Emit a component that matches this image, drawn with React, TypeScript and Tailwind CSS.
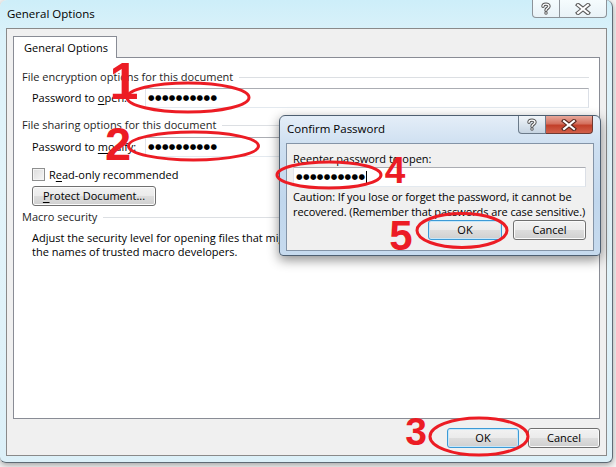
import React from "react";

const ui = "font-['Segoe_UI','Open_Sans',sans-serif] text-[11px] text-black";

function CaptionButtons({ active }: { active?: boolean }) {
  return (
    <div className="flex h-[18px]">
      <div
        className={`w-[28px] h-[18px] flex items-center justify-center border border-t-0 rounded-bl-[4px] ${
          active
            ? "border-[#6b7a8a] bg-[linear-gradient(180deg,#f1f5f9_0%,#dbe5ee_50%,#c6d4e2_100%)]"
            : "border-[#8d9399] bg-[linear-gradient(180deg,#ffffffcc_0%,#eef3f6cc_100%)]"
        }`}
      >
        <svg width="10" height="13" viewBox="0 0 10 13">
          <path
            d="M2 4.2 C2 1.5 8 1.3 8 4.2 C8 6.3 5 6.2 5 8.3"
            fill="none"
            stroke="#555"
            strokeWidth="3.4"
            strokeLinecap="round"
          />
          <path
            d="M2 4.2 C2 1.5 8 1.3 8 4.2 C8 6.3 5 6.2 5 8.3"
            fill="none"
            stroke="#fff"
            strokeWidth="1.4"
            strokeLinecap="round"
          />
          <circle cx="5" cy="11" r="1.7" fill="#555" />
          <circle cx="5" cy="11" r="0.8" fill="#fff" />
        </svg>
      </div>
      <div
        className={`w-[47px] h-[18px] flex items-center justify-center border border-t-0 border-l-0 rounded-br-[4px] ${
          active
            ? "border-[#6e3a33] bg-[linear-gradient(180deg,#e8a89b_0%,#d4705e_45%,#c2402a_55%,#d2604a_100%)]"
            : "border-[#8d9399] bg-[linear-gradient(180deg,#ffffffcc_0%,#eef3f6cc_100%)]"
        }`}
      >
        <svg width="16" height="12" viewBox="0 0 16 12">
          <path d="M3 2 L13 10 M13 2 L3 10" stroke={active ? "#5a2a22" : "#5d5d5d"} strokeWidth="4.2" strokeLinecap="square" />
          <path d="M3 2 L13 10 M13 2 L3 10" stroke="#fff" strokeWidth="2" strokeLinecap="square" />
        </svg>
      </div>
    </div>
  );
}

function Btn({ children, def, w = "w-[73px]" }: { children: React.ReactNode; def?: boolean; w?: string }) {
  return (
    <div
      className={`${w} h-[20px] flex items-center justify-center rounded-[3px] border whitespace-nowrap ${
        def
          ? "border-[#3c9ad6] shadow-[inset_0_0_0_1px_#c7e7f9]"
          : "border-[#707070] shadow-[inset_0_0_0_1px_#fbfbfb]"
      } bg-[linear-gradient(180deg,#f2f2f2_0%,#ebebeb_48%,#dddddd_52%,#cfcfcf_100%)]`}
    >
      {children}
    </div>
  );
}

function Dots() {
  return (
    <span className="font-['DejaVu_Sans',sans-serif] text-[7.5px] leading-[18px] tracking-[0.4px]">●●●●●●●●●●</span>
  );
}

function GroupHeading({ text }: { text: string }) {
  return (
    <div className="flex items-center h-[16px] pr-[10px]">
      <span className="leading-[16px] text-[#1e1e1e] whitespace-nowrap">{text}</span>
      <div className="flex-1 ml-[6px] h-px bg-[#dcdfe3]" />
    </div>
  );
}

function PasswordRow({ label }: { label: React.ReactNode }) {
  return (
    <div className="flex items-center pl-[10px] pr-[10px] h-[20px]">
      <span className="w-[113px] leading-[16px] whitespace-nowrap">{label}</span>
      <div className="flex-1 h-[20px] border border-[#abadb3] border-l-[#e2e3ea] border-r-[#dbdfe6] border-b-[#e3e9ef] bg-white pl-[2px] flex items-center">
        <Dots />
      </div>
    </div>
  );
}

function ConfirmDialog() {
  return (
    <div className="absolute left-[279px] top-[115px] w-[322px] h-[141px] rounded-t-[6px] rounded-b-[4px] border border-[#4e5f71] bg-[linear-gradient(180deg,#e4eef8_0%,#cfe0f1_20%,#c1d7ed_60%,#c6daee_100%)] shadow-[0_4px_12px_rgba(0,0,0,0.45)] flex flex-col">
      <div className="h-[27px] flex justify-between">
        <span className="pl-[7px] pt-[5px] leading-[16px] text-[11.5px]">Confirm Password</span>
        <div className="mr-[7px]">
          <CaptionButtons active />
        </div>
      </div>
      <div className="mx-[6px] h-[108px] border border-[#8494a7] bg-[#f0f0f0] flex flex-col pl-[6px] pr-[7px] pt-[7px]">
        <span className="leading-[15px]">Reenter password to open:</span>
        <div className="mt-[1px] h-[20px] border border-[#abadb3] border-l-[#e2e3ea] border-r-[#dbdfe6] border-b-[#e3e9ef] bg-white pl-[2px] flex items-center">
          <Dots />
          <span className="ml-[1px] w-px h-[13px] bg-black" />
        </div>
        <div className="mt-[2px] leading-[15px] whitespace-nowrap tracking-[-0.1px]">
          <div>Caution: If you lose or forget the password, it cannot be</div>
          <div>recovered. (Remember that passwords are case sensitive.)</div>
        </div>
        <div className="mt-[1px] flex justify-end gap-[11px]">
          <Btn def w="w-[74px]">OK</Btn>
          <Btn w="w-[73px]">Cancel</Btn>
        </div>
      </div>
    </div>
  );
}

function Annotations() {
  const red = "#ec1c24";
  return (
    <svg className="absolute left-0 top-0 pointer-events-none" width="616" height="467">
      <ellipse cx="188" cy="97.5" rx="61" ry="14.5" fill="none" stroke={red} strokeWidth="3" />
      <ellipse cx="193.5" cy="146" rx="65" ry="14" fill="none" stroke={red} strokeWidth="3" />
      <ellipse cx="329" cy="175" rx="52" ry="13" fill="none" stroke={red} strokeWidth="3" />
      <ellipse cx="462" cy="230.5" rx="45" ry="17" fill="none" stroke={red} strokeWidth="3" />
      <ellipse cx="479" cy="436.5" rx="49" ry="18.5" fill="none" stroke={red} strokeWidth="3" />
      <g fill={red} fontFamily="Liberation Sans, Arial, sans-serif" fontWeight="bold" textAnchor="middle">
        <text x="124" y="99" fontSize="52">1</text>
        <text x="118" y="160" fontSize="47">2</text>
        <text x="416" y="445" fontSize="39">3</text>
        <text x="395" y="183" fontSize="37">4</text>
        <text x="401" y="250" fontSize="42">5</text>
      </g>
    </svg>
  );
}

export default function App() {
  return (
    <div className={`relative w-[616px] h-[467px] overflow-hidden bg-[#f5f5f5] ${ui}`}>
      {/* main dialog */}
      <div className="w-[613px] h-[463px] rounded-t-[7px] rounded-b-[6px] border-r border-b border-[#5f6b75] bg-[linear-gradient(180deg,#cdeef9_0%,#dcf2fa_8%,#e3f4fa_40%,#dcf0f8_100%)] shadow-[0_2px_6px_rgba(0,0,0,0.35)] flex flex-col">
        <div className="h-[28px] flex justify-between">
          <span className="pl-[7px] pt-[6px] leading-[16px] text-[11.5px]">General Options</span>
          <div className="mr-[5px]">
            <CaptionButtons />
          </div>
        </div>
        <div className="ml-[6px] w-[601px] h-[428px] border border-[#8a8a8a] bg-[#f0f0f0] flex flex-col px-[6px] pt-[7px]">
          {/* tab */}
          <div className="relative z-10 -mb-px w-[104px] h-[22px] border border-b-0 border-[#898c95] bg-white flex items-center pl-[10px] whitespace-nowrap">
            <span className="leading-[16px]">General Options</span>
          </div>
          {/* panel */}
          <div className="h-[362px] border border-[#898c95] bg-white flex flex-col pl-[8px] pt-[11px]">
            <GroupHeading text="File encryption options for this document" />
            <div className="mt-[3px]">
              <PasswordRow
                label={
                  <>
                    Password to <u className="underline-offset-2">o</u>pen:
                  </>
                }
              />
            </div>
            <div className="mt-[9px]">
              <GroupHeading text="File sharing options for this document" />
            </div>
            <div className="mt-[4px]">
              <PasswordRow
                label={
                  <>
                    Password to <u className="underline-offset-2">m</u>odify:
                  </>
                }
              />
            </div>
            <div className="mt-[11px] ml-[10px] flex items-center h-[13px]">
              <div className="w-[13px] h-[13px] border border-[#8e8f8f] bg-[linear-gradient(135deg,#dcdcdc_0%,#f6f6f6_100%)] shadow-[inset_0_0_0_1px_#f4f4f4]" />
              <span className="ml-[4px] leading-[16px]">
                R<u className="underline-offset-2">e</u>ad-only recommended
              </span>
            </div>
            <div className="mt-[5px] ml-[10px]">
              <Btn w="w-[124px]">
                <span>
                  <u className="underline-offset-2">P</u>rotect Document...
                </span>
              </Btn>
            </div>
            <div className="mt-[3px]">
              <GroupHeading text="Macro security" />
            </div>
            <div className="mt-[6px] ml-[10px] leading-[14px] whitespace-nowrap">
              <div>Adjust the security level for opening files that might contain macro viruses, and specify</div>
              <div>the names of trusted macro developers.</div>
            </div>
          </div>
          {/* bottom buttons */}
          <div className="mt-[9px] flex justify-end gap-[9px]">
            <Btn def w="w-[72px]">OK</Btn>
            <Btn w="w-[72px]">Cancel</Btn>
          </div>
        </div>
      </div>

      <ConfirmDialog />
      <Annotations />
    </div>
  );
}
